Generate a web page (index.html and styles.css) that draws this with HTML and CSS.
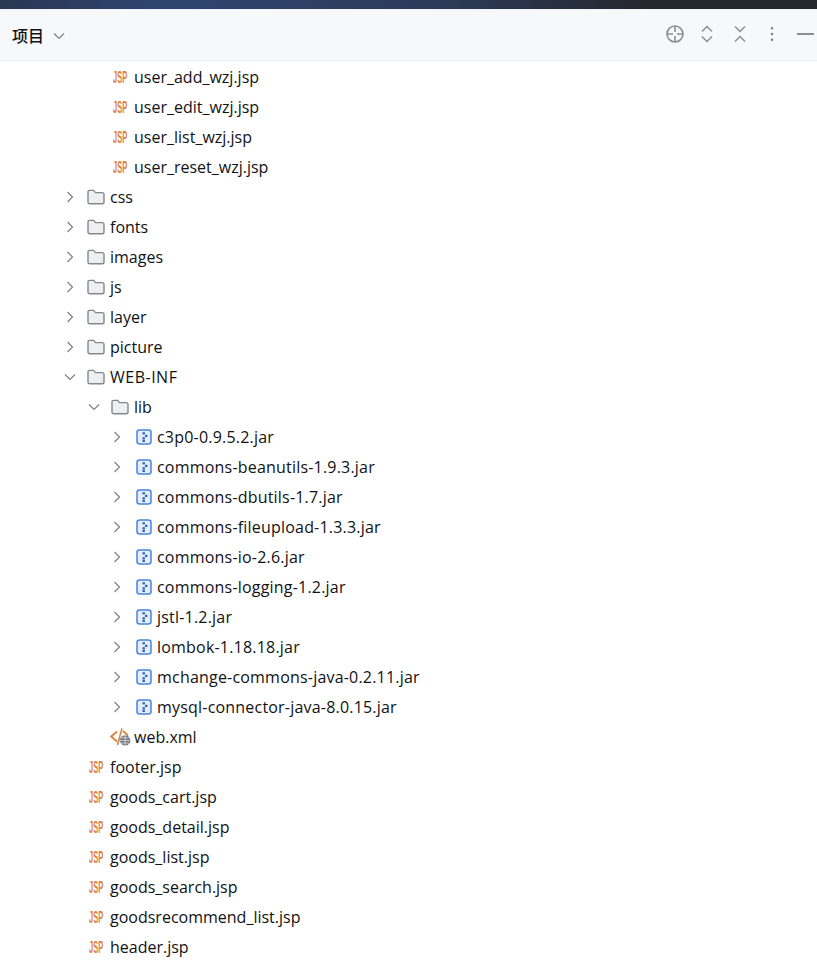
FILE: index.html
```html
<!DOCTYPE html>
<html>
<head>
  <meta charset="utf-8">
  <title>项目</title>
  <link rel="stylesheet" href="styles.css">
</head>
<body>
  <svg class="defs" width="0" height="0">
    <symbol id="folder" viewBox="0 0 18 16">
      <path d="M1 3 A1.6 1.6 0 0 1 2.6 1.4 H6.6 L8.6 3.6 H15.2 A1.8 1.8 0 0 1 17 5.4 V13 A1.8 1.8 0 0 1 15.2 14.8 H2.8 A1.8 1.8 0 0 1 1 13 Z" fill="#eeeff1" stroke="#84878f" stroke-width="1.4"/>
    </symbol>
    <symbol id="right" viewBox="0 0 12 12">
      <path d="M3.5 1 L8.5 6 L3.5 11" fill="none" stroke="#7d818a" stroke-width="1.2"/>
    </symbol>
    <symbol id="down" viewBox="0 0 12 12">
      <path d="M1 3.5 L6 8.5 L11 3.5" fill="none" stroke="#7d818a" stroke-width="1.2"/>
    </symbol>
    <symbol id="jar" viewBox="0 0 16 16">
      <rect x="1" y="1" width="14" height="14" rx="2.5" fill="#e3edfc" stroke="#4a83de" stroke-width="1.5"/>
      <rect x="6.5" y="3.2" width="2.4" height="2.2" fill="#2f62b8"/>
      <rect x="9" y="5.8" width="2.4" height="2.2" fill="#2f62b8"/>
      <rect x="6.5" y="8.2" width="2.4" height="2.2" fill="#2f62b8"/>
      <rect x="6.5" y="10.8" width="2.4" height="2.2" fill="#2f62b8"/>
    </symbol>
    <symbol id="xml" viewBox="0 0 22 18">
      <path d="M7 3.5 L1.2 8.5 L7 13.5" fill="none" stroke="#dd8142" stroke-width="1.8"/>
      <path d="M12 .5 L7.5 17" fill="none" stroke="#dd8142" stroke-width="1.6"/>
      <path d="M13 3 L18 7.5" fill="none" stroke="#dd8142" stroke-width="1.8"/>
      <circle cx="15.2" cy="12.4" r="5.2" fill="#6f737b"/>
      <path d="M10 12.4 H20.4 M15.2 7.2 V17.6 M11 9.8 H19.4 M11 15 H19.4" stroke="#f2f3f5" stroke-width=".7" fill="none"/>
    </symbol>
  </svg>

  <div class="topstrip"></div>

  <header class="toolbar">
    <div class="title">
      <span>项目</span>
      <svg class="title-caret" width="12" height="12"><use href="#down"/></svg>
    </div>
    <div class="actions">
      <svg class="act act-target" width="20" height="20" viewBox="0 0 20 20" fill="none" stroke="#8a8d96" stroke-width="1.6">
        <circle cx="10" cy="10" r="8"/>
        <path d="M10 2 V8 M10 12 V18 M2 10 H8 M12 10 H18"/>
      </svg>
      <svg class="act act-expand" width="14" height="18" viewBox="0 0 14 18" fill="none" stroke="#8a8d96" stroke-width="1.4">
        <path d="M2 6.5 L7 1.5 L12 6.5 M2 11.5 L7 16.5 L12 11.5"/>
      </svg>
      <svg class="act act-collapse" width="14" height="18" viewBox="0 0 14 18" fill="none" stroke="#8a8d96" stroke-width="1.4">
        <path d="M2 1.5 L7 6.5 L12 1.5 M2 16.5 L7 11.5 L12 16.5"/>
      </svg>
      <svg class="act act-more" width="4" height="16" viewBox="0 0 4 16" fill="#7f828b">
        <rect x="0.8" y="1" width="2.4" height="2.4" rx="1"/>
        <rect x="0.8" y="6.8" width="2.4" height="2.4" rx="1"/>
        <rect x="0.8" y="12.6" width="2.4" height="2.4" rx="1"/>
      </svg>
      <span class="act-min"></span>
    </div>
  </header>

  <ul class="tree">
    <li class="row lvl3"><span class="jsp">JSP</span><span>user_add_wzj.jsp</span></li>
    <li class="row lvl3"><span class="jsp">JSP</span><span>user_edit_wzj.jsp</span></li>
    <li class="row lvl3"><span class="jsp">JSP</span><span>user_list_wzj.jsp</span></li>
    <li class="row lvl3"><span class="jsp">JSP</span><span>user_reset_wzj.jsp</span></li>

    <li class="row lvl1"><svg class="arrow"><use href="#right"/></svg><svg class="folder"><use href="#folder"/></svg><span>css</span></li>
    <li class="row lvl1"><svg class="arrow"><use href="#right"/></svg><svg class="folder"><use href="#folder"/></svg><span>fonts</span></li>
    <li class="row lvl1"><svg class="arrow"><use href="#right"/></svg><svg class="folder"><use href="#folder"/></svg><span>images</span></li>
    <li class="row lvl1"><svg class="arrow"><use href="#right"/></svg><svg class="folder"><use href="#folder"/></svg><span>js</span></li>
    <li class="row lvl1"><svg class="arrow"><use href="#right"/></svg><svg class="folder"><use href="#folder"/></svg><span>layer</span></li>
    <li class="row lvl1"><svg class="arrow"><use href="#right"/></svg><svg class="folder"><use href="#folder"/></svg><span>picture</span></li>
    <li class="row lvl1"><svg class="arrow"><use href="#down"/></svg><svg class="folder"><use href="#folder"/></svg><span class="caps">WEB-INF</span></li>
    <li class="row lvl2"><svg class="arrow"><use href="#down"/></svg><svg class="folder"><use href="#folder"/></svg><span>lib</span></li>

    <li class="row lvl4"><svg class="arrow"><use href="#right"/></svg><svg class="jar"><use href="#jar"/></svg><span>c3p0-0.9.5.2.jar</span></li>
    <li class="row lvl4"><svg class="arrow"><use href="#right"/></svg><svg class="jar"><use href="#jar"/></svg><span>commons-beanutils-1.9.3.jar</span></li>
    <li class="row lvl4"><svg class="arrow"><use href="#right"/></svg><svg class="jar"><use href="#jar"/></svg><span>commons-dbutils-1.7.jar</span></li>
    <li class="row lvl4"><svg class="arrow"><use href="#right"/></svg><svg class="jar"><use href="#jar"/></svg><span>commons-fileupload-1.3.3.jar</span></li>
    <li class="row lvl4"><svg class="arrow"><use href="#right"/></svg><svg class="jar"><use href="#jar"/></svg><span>commons-io-2.6.jar</span></li>
    <li class="row lvl4"><svg class="arrow"><use href="#right"/></svg><svg class="jar"><use href="#jar"/></svg><span>commons-logging-1.2.jar</span></li>
    <li class="row lvl4"><svg class="arrow"><use href="#right"/></svg><svg class="jar"><use href="#jar"/></svg><span>jstl-1.2.jar</span></li>
    <li class="row lvl4"><svg class="arrow"><use href="#right"/></svg><svg class="jar"><use href="#jar"/></svg><span>lombok-1.18.18.jar</span></li>
    <li class="row lvl4"><svg class="arrow"><use href="#right"/></svg><svg class="jar"><use href="#jar"/></svg><span>mchange-commons-java-0.2.11.jar</span></li>
    <li class="row lvl4"><svg class="arrow"><use href="#right"/></svg><svg class="jar"><use href="#jar"/></svg><span>mysql-connector-java-8.0.15.jar</span></li>

    <li class="row xml-row"><svg class="xml"><use href="#xml"/></svg><span>web.xml</span></li>

    <li class="row lvl2"><span class="jsp">JSP</span><span>footer.jsp</span></li>
    <li class="row lvl2"><span class="jsp">JSP</span><span>goods_cart.jsp</span></li>
    <li class="row lvl2"><span class="jsp">JSP</span><span>goods_detail.jsp</span></li>
    <li class="row lvl2"><span class="jsp">JSP</span><span>goods_list.jsp</span></li>
    <li class="row lvl2"><span class="jsp">JSP</span><span>goods_search.jsp</span></li>
    <li class="row lvl2"><span class="jsp">JSP</span><span>goodsrecommend_list.jsp</span></li>
    <li class="row lvl2"><span class="jsp">JSP</span><span>header.jsp</span></li>
  </ul>
</body>
</html>
```

FILE: styles.css
```css
html, body {
  margin: 0;
  padding: 0;
  height: 100%;
  overflow: hidden;
}

body {
  background: #ffffff;
  color: #111214;
  font-family: "Open Sans", "Noto Sans", "Noto Sans CJK SC", sans-serif;
  font-size: 16px;
}

.defs {
  display: block;
  height: 0;
}

.topstrip {
  height: 9px;
  background: linear-gradient(90deg, #2a3654 0%, #2f4570 20%, #2c3a58 55%, #25272c 80%, #25272c 100%);
}

.toolbar {
  height: 52px;
  box-sizing: border-box;
  border-top: 1px solid #f0f3fa;
  border-bottom: 1px solid #ebecf0;
  background: #f7f8fa;
  display: flex;
  align-items: center;
  justify-content: space-between;
  padding: 0 0 0 12px;
}

.title {
  display: flex;
  align-items: center;
  gap: 9px;
  font-family: "Noto Sans CJK SC", sans-serif;
  font-size: 16px;
  font-weight: 500;
}

.title-caret {
  margin-top: 2px;
}

.actions {
  display: flex;
  align-items: center;
  margin-bottom: 2px;
}

.act-target { margin-right: 15px; }
.act-expand { margin-right: 19px; }
.act-collapse { margin-right: 23px; }
.act-more { margin-right: 23px; }

.act-min {
  width: 17px;
  height: 2px;
  background: #8a8d96;
  margin-right: 3px;
}

.tree {
  list-style: none;
  margin: 0;
  padding: 1px 0 0;
}

.row {
  height: 30px;
  display: flex;
  align-items: center;
  white-space: nowrap;
  box-sizing: border-box;
}

.lvl1 { padding-left: 64px; }
.lvl2 { padding-left: 88px; }
.lvl3 { padding-left: 112px; }
.lvl4 { padding-left: 111px; letter-spacing: .2px; }

.caps {
  letter-spacing: .5px;
}

.arrow {
  width: 12px;
  height: 12px;
  flex: none;
  margin-right: 11px;
}

.folder {
  width: 18px;
  height: 16px;
  flex: none;
  margin-right: 5px;
}

.jar {
  width: 16px;
  height: 16px;
  flex: none;
  margin-right: 5px;
}

.lvl4 .arrow {
  margin-right: 13px;
}

.xml-row {
  padding-left: 110px;
}

.xml {
  width: 22px;
  height: 18px;
  flex: none;
  margin-right: 2px;
}

.jsp {
  width: 15px;
  margin: 1px 6px 0 1px;
  flex: none;
  color: #dd8142;
  font-family: "Liberation Sans", sans-serif;
  font-size: 17px;
  font-weight: 700;
  line-height: 1;
  transform: scaleX(.44);
  transform-origin: left center;
}
```
